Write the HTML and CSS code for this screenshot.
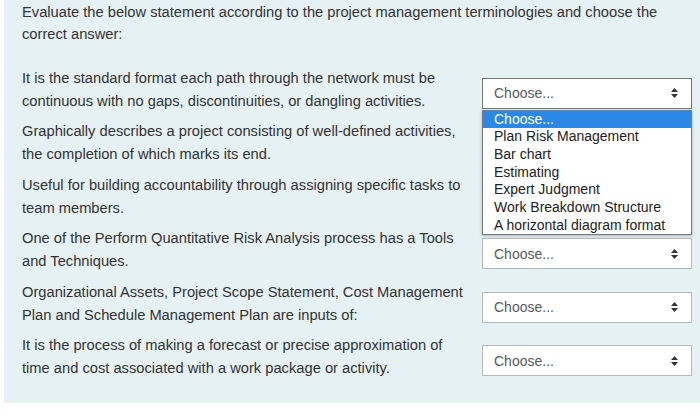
FILE: index.html
```html
<!DOCTYPE html>
<html>
<head>
<meta charset="utf-8">
<link rel="stylesheet" href="styles.css">
</head>
<body>
<div class="panel">
  <p class="intro">Evaluate the below statement according to the project management terminologies and choose the correct answer:</p>
  <div class="rows">
    <div class="row">
      <div class="text">It is the standard format each path through the network must be continuous with no gaps, discontinuities, or dangling activities.</div>
      <div class="sel-wrap">
        <div class="select focused"><span>Choose...</span><svg class="arrows" width="7" height="10" viewBox="0 0 7 10"><path d="M3.5 0 L7 4 L0 4 Z M0 6 L7 6 L3.5 10 Z" fill="#333"/></svg></div>
        <ul class="dropdown">
          <li class="active">Choose...</li>
          <li>Plan Risk Management</li>
          <li>Bar chart</li>
          <li>Estimating</li>
          <li>Expert Judgment</li>
          <li>Work Breakdown Structure</li>
          <li>A horizontal diagram format</li>
        </ul>
      </div>
    </div>
    <div class="row">
      <div class="text">Graphically describes a project consisting of well-defined activities, the completion of which marks its end.</div>
      <div class="sel-wrap">
        <div class="select"><span>Choose...</span><svg class="arrows" width="7" height="10" viewBox="0 0 7 10"><path d="M3.5 0 L7 4 L0 4 Z M0 6 L7 6 L3.5 10 Z" fill="#333"/></svg></div>
      </div>
    </div>
    <div class="row">
      <div class="text">Useful for building accountability through assigning specific tasks to team members.</div>
      <div class="sel-wrap">
        <div class="select"><span>Choose...</span><svg class="arrows" width="7" height="10" viewBox="0 0 7 10"><path d="M3.5 0 L7 4 L0 4 Z M0 6 L7 6 L3.5 10 Z" fill="#333"/></svg></div>
      </div>
    </div>
    <div class="row">
      <div class="text">One of the Perform Quantitative Risk Analysis process has a Tools and Techniques.</div>
      <div class="sel-wrap">
        <div class="select"><span>Choose...</span><svg class="arrows" width="7" height="10" viewBox="0 0 7 10"><path d="M3.5 0 L7 4 L0 4 Z M0 6 L7 6 L3.5 10 Z" fill="#333"/></svg></div>
      </div>
    </div>
    <div class="row">
      <div class="text">Organizational Assets, Project Scope Statement, Cost Management Plan and Schedule Management Plan are inputs of:</div>
      <div class="sel-wrap">
        <div class="select"><span>Choose...</span><svg class="arrows" width="7" height="10" viewBox="0 0 7 10"><path d="M3.5 0 L7 4 L0 4 Z M0 6 L7 6 L3.5 10 Z" fill="#333"/></svg></div>
      </div>
    </div>
    <div class="row">
      <div class="text">It is the process of making a forecast or precise approximation of time and cost associated with a work package or activity.</div>
      <div class="sel-wrap">
        <div class="select"><span>Choose...</span><svg class="arrows" width="7" height="10" viewBox="0 0 7 10"><path d="M3.5 0 L7 4 L0 4 Z M0 6 L7 6 L3.5 10 Z" fill="#333"/></svg></div>
      </div>
    </div>
  </div>
</div>
</body>
</html>
```

FILE: styles.css
```css
html, body {
  margin: 0;
  padding: 0;
  background: #ffffff;
}
body {
  font-family: "Liberation Sans", Arial, sans-serif;
  font-size: 14.7px;
  color: #333333;
}
.panel {
  margin-left: 4px;
  background: #e6f1f4;
  padding: 1px 0 23px 18px;
  height: 379px;
}
.intro {
  margin: 0;
  line-height: 22px;
  width: 660px;
}
.rows {
  margin-top: 21.5px;
  display: flex;
  flex-direction: column;
  gap: 7.5px;
}
.row {
  display: grid;
  grid-template-columns: 460px 210px;
  align-items: center;
  height: 46px;
}
.text {
  line-height: 23px;
  width: 450px;
}
.sel-wrap {
  position: relative;
  margin-top: 7px;
  font-size: 14px;
}
.select {
  box-sizing: border-box;
  height: 31px;
  border: 1px solid #b5b9bb;
  background: #ffffff;
  display: flex;
  align-items: center;
  justify-content: space-between;
  padding: 0 13px 0 11px;
  color: #555a5c;
}
.select.focused {
  border-color: #6f7a6f;
}
.dropdown {
  position: absolute;
  top: calc(100% + 1px);
  left: 0;
  width: 210px;
  box-sizing: border-box;
  margin: 0;
  padding: 0;
  list-style: none;
  background: #ffffff;
  border: 1px solid #7a7a7a;
  z-index: 5;
  box-shadow: 0 1px 3px rgba(0,0,0,0.25);
}
.dropdown li {
  height: 17.7px;
  line-height: 17.7px;
  padding-left: 11px;
  color: #222222;
  white-space: nowrap;
}
.dropdown li.active {
  background: #2b88e6;
  color: #ffffff;
}
```
